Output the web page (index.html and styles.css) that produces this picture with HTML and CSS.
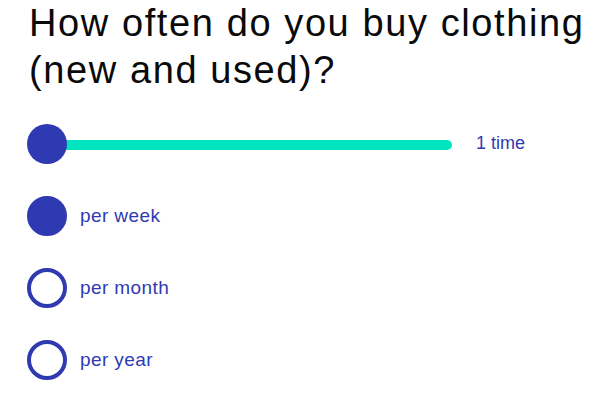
FILE: index.html
```html
<!DOCTYPE html>
<html lang="en">
<head>
<meta charset="utf-8">
<link rel="stylesheet" href="styles.css">
<title>Clothing frequency</title>
</head>
<body>
<main class="question">
  <h1 class="title">How often do you buy clothing<br>(new and used)?</h1>
  <div class="slider">
    <span class="thumb"></span>
    <span class="track"></span>
    <span class="slider-value">1 time</span>
  </div>
  <ul class="options">
    <li class="option"><span class="radio checked"></span><span class="label">per week</span></li>
    <li class="option"><span class="radio"></span><span class="label">per month</span></li>
    <li class="option"><span class="radio"></span><span class="label">per year</span></li>
  </ul>
</main>
</body>
</html>
```
FILE: styles.css
```css
html, body {
  margin: 0;
  padding: 0;
  background: #ffffff;
}
body {
  font-family: "Liberation Sans", Arial, sans-serif;
}
.question {
  padding: 0 0 0 27px;
}
.title {
  margin: 0;
  padding-top: 0;
  font-size: 38px;
  font-weight: 400;
  line-height: 47px;
  letter-spacing: 1.6px;
  color: #0a0a0a;
  margin-left: 2px;
}
.slider {
  display: flex;
  align-items: center;
  height: 40px;
  margin-top: 30px;
}
.thumb {
  width: 40px;
  height: 40px;
  border-radius: 50%;
  background: #2f3ab2;
  flex: none;
  position: relative;
  z-index: 1;
}
.track {
  width: 390px;
  height: 10px;
  margin-left: -5px;
  margin-top: 2px;
  border-radius: 5px;
  background: #00e5bf;
}
.slider-value {
  margin-left: 24px;
  font-size: 18px;
  color: #2f3ab2;
  margin-top: -2px;
}
.options {
  list-style: none;
  margin: 32px 0 0;
  padding: 0;
  display: flex;
  flex-direction: column;
  gap: 32px;
}
.option {
  display: flex;
  align-items: center;
  height: 40px;
  gap: 13px;
}
.radio {
  box-sizing: border-box;
  width: 40px;
  height: 40px;
  border-radius: 50%;
  border: 4px solid #2f3ab2;
  flex: none;
}
.radio.checked {
  background: #2f3ab2;
}
.label {
  font-size: 19px;
  letter-spacing: 0.4px;
  color: #2f3ab2;
}
```
